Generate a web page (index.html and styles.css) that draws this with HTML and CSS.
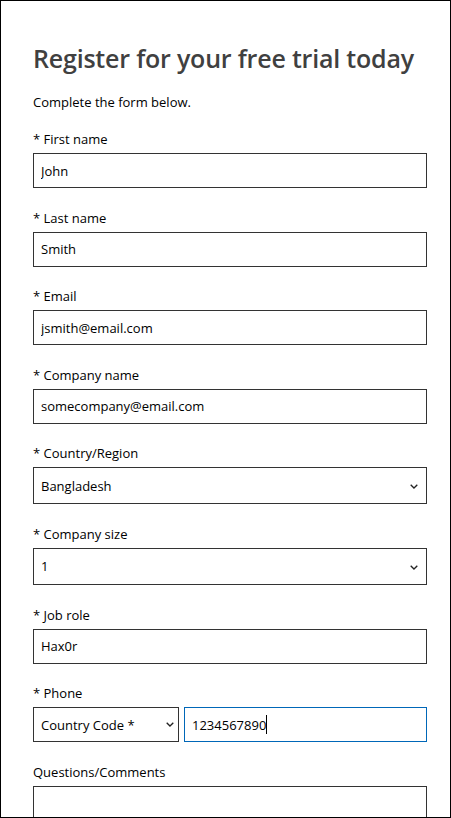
FILE: index.html
```html
<!DOCTYPE html>
<html lang="en">
<head>
<meta charset="utf-8">
<title>Register for your free trial today</title>
<link rel="stylesheet" href="styles.css">
</head>
<body>
<div class="page">
  <form class="form">
    <h1 class="title">Register for your free trial today</h1>
    <p class="intro">Complete the form below.</p>

    <div class="field">
      <label class="label" for="fn">* First name</label>
      <input class="control" id="fn" type="text" value="John">
    </div>

    <div class="field">
      <label class="label" for="ln">* Last name</label>
      <input class="control" id="ln" type="text" value="Smith">
    </div>

    <div class="field">
      <label class="label" for="em">* Email</label>
      <input class="control" id="em" type="text" value="jsmith@email.com">
    </div>

    <div class="field">
      <label class="label" for="cn">* Company name</label>
      <input class="control" id="cn" type="text" value="somecompany@email.com">
    </div>

    <div class="field field-select">
      <label class="label" for="cr">* Country/Region</label>
      <div class="select-wrap">
        <select class="control select" id="cr"><option>Bangladesh</option></select>
        <svg class="chevron" width="8" height="5" viewBox="0 0 8 5"><path d="M0.7 0.7 L4 4 L7.3 0.7" fill="none" stroke="#222" stroke-width="1.3"/></svg>
      </div>
    </div>

    <div class="field field-select">
      <label class="label" for="cs">* Company size</label>
      <div class="select-wrap">
        <select class="control select" id="cs"><option>1</option></select>
        <svg class="chevron" width="8" height="5" viewBox="0 0 8 5"><path d="M0.7 0.7 L4 4 L7.3 0.7" fill="none" stroke="#222" stroke-width="1.3"/></svg>
      </div>
    </div>

    <div class="field">
      <label class="label" for="jr">* Job role</label>
      <input class="control" id="jr" type="text" value="Hax0r">
    </div>

    <div class="field">
      <label class="label" for="cc">* Phone</label>
      <div class="phone-row">
        <div class="select-wrap code">
          <select class="control select" id="cc"><option>Country Code *</option></select>
          <svg class="chevron" width="8" height="5" viewBox="0 0 8 5"><path d="M0.7 0.7 L4 4 L7.3 0.7" fill="none" stroke="#222" stroke-width="1.3"/></svg>
        </div>
        <div class="control focused" role="textbox">1234567890<span class="caret"></span></div>
      </div>
    </div>

    <div class="field">
      <label class="label" for="qc">Questions/Comments</label>
      <textarea class="control textarea" id="qc"></textarea>
    </div>
  </form>
</div>
</body>
</html>
```

FILE: styles.css
```css
html, body {
  margin: 0;
  padding: 0;
  background: #fff;
}

body {
  font-family: "Open Sans", "Noto Sans", "Liberation Sans", sans-serif;
  color: #000;
}

.page {
  box-sizing: border-box;
  width: 451px;
  height: 818px;
  border: 1px solid #000;
  padding: 0 23px 0 32px;
  overflow: hidden;
}

.form {
  display: flex;
  flex-direction: column;
}

.title {
  margin: 41px 0 0;
  font-size: 25px;
  line-height: 32px;
  font-weight: 600;
  color: #404040;
  letter-spacing: -0.2px;
}

.intro {
  margin: 18px 0 0;
  font-size: 13px;
  line-height: 20px;
  color: #000;
}

.field {
  display: flex;
  flex-direction: column;
  margin-top: 17px;
}

.field + .field {
  margin-top: 19.6px;
}

.label {
  font-size: 13px;
  line-height: 20px;
  color: #000;
  margin-bottom: 4px;
}

.control {
  box-sizing: border-box;
  width: 100%;
  height: 35px;
  margin: 0;
  padding: 0 7px;
  border: 1px solid #333;
  border-radius: 0;
  background: #fff;
  font-family: inherit;
  font-size: 13px;
  color: #000;
  outline: none;
}

.select-wrap {
  position: relative;
}

.select {
  height: 37px;
  appearance: none;
  -webkit-appearance: none;
  padding-right: 24px;
}

.chevron {
  position: absolute;
  right: 9px;
  top: 17px;
}

.phone-row {
  display: flex;
  gap: 5px;
}

.phone-row .code {
  width: 146px;
  flex: none;
}

.phone-row .select {
  height: 35px;
}

.phone-row .code .chevron {
  top: 15px;
  right: 5px;
}

.focused {
  flex: 1;
  display: flex;
  align-items: center;
  border-color: #0067b8;
}

.caret {
  display: inline-block;
  width: 1px;
  height: 19px;
  background: #000;
}

.textarea {
  height: 80px;
  resize: none;
}
```
